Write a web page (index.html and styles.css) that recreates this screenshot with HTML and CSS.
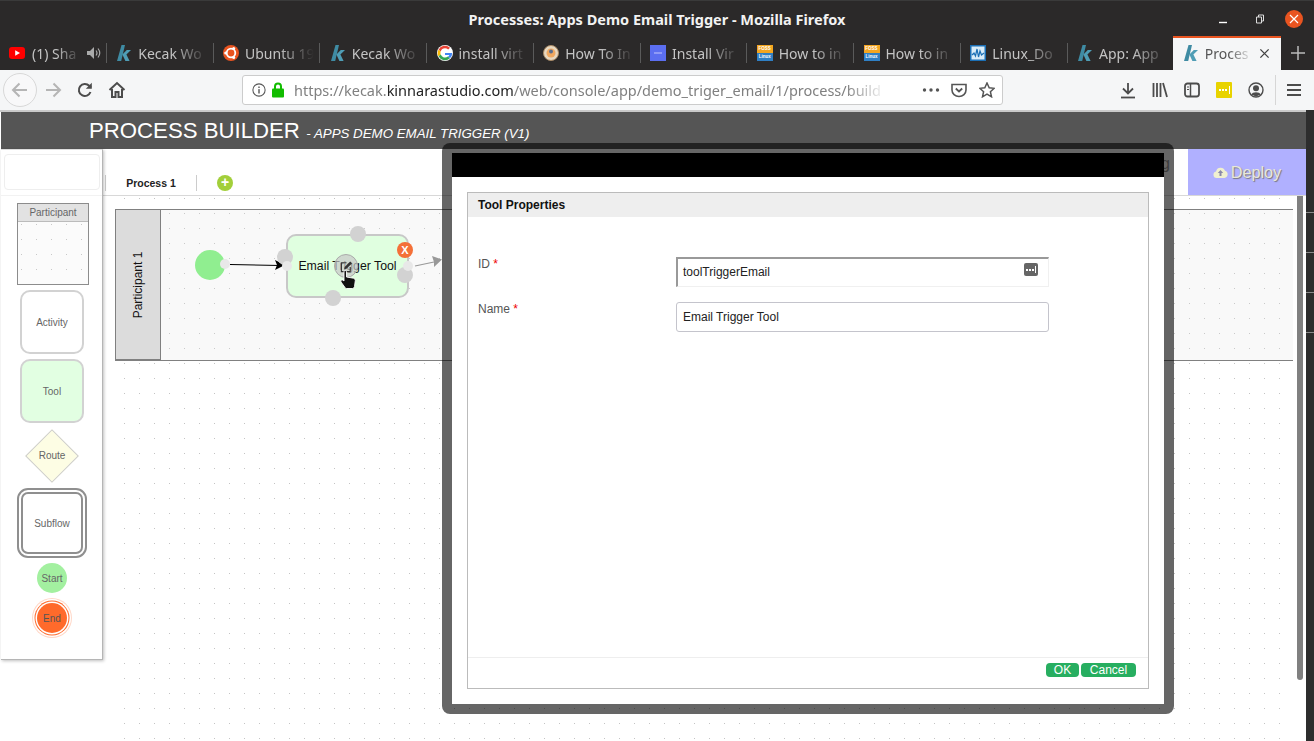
FILE: index.html
```html
<html>
    <head>
        <title>Processes: Apps Demo Email Trigger - Mozilla Firefox</title>
        <link rel="stylesheet" href="styles.css">
    </head>
    <body>
        <svg class="defs" width="0" height="0">
            <symbol id="klogo" viewBox="0 0 16 16">
                <path d="M5.5 0L9 0L5.2 16L1 16Z" fill="#3f8ba3"/>
                <path d="M15 5L10.8 5L6.4 9.6L9.4 16L13.6 16L10.4 9.6Z" fill="#4f9db5"/>
            </symbol>
        </svg>

        <!-- window title -->
        <div class="titlebar">
            <span class="window-title">Processes: Apps Demo Email Trigger - Mozilla Firefox</span>
            <div class="window-buttons">
                <svg class="win-min" width="10" height="10" viewBox="0 0 10 10"><path d="M1 8.5H9" stroke="#fff" stroke-width="1.4"/></svg>
                <svg class="win-max" width="10" height="10" viewBox="0 0 10 10"><path d="M1.5 3H6.5V9H1.5ZM3.5 3V1H8.5V7H6.5" fill="none" stroke="#ddd"/></svg>
                <div class="win-close">
                    <svg width="10" height="10" viewBox="0 0 10 10"><path d="M1 1L9 9M9 1L1 9" stroke="#fff" stroke-width="1.2"/></svg>
                </div>
            </div>
        </div>

        <!-- tabs -->
        <div class="tabstrip">
            <div class="tabs">
                <div class="tab tab-first">
                    <svg class="fav" viewBox="0 0 16 16"><rect y="2" width="16" height="12" rx="3" fill="#f00"/><path d="M6.2 5.2L11 8L6.2 10.8Z" fill="#fff"/></svg>
                    <span class="tab-text tab-text-short">(1) Sha</span>
                    <svg class="mute" viewBox="0 0 14 14"><path d="M0 5H3L7 1V13L3 9H0Z" fill="#aaa"/><path d="M9 4.5Q11 7 9 9.5M11 2.5Q14.500 7 11 11.500" fill="none" stroke="#aaa" stroke-width="1.2"/></svg>
                </div>
                <div class="tab">
                    <svg class="fav"><use href="#klogo"/></svg>
                    <span class="tab-text">Kecak Wo</span>
                </div>
                <div class="tab">
                    <svg class="fav" viewBox="0 0 16 16"><circle cx="8" cy="8" r="8" fill="#e95420"/><circle cx="8" cy="8" r="4.300" fill="none" stroke="#fff" stroke-width="1.800"/><circle cx="2.700" cy="8" r="1.500" fill="#fff"/><circle cx="10.700" cy="3.400" r="1.500" fill="#fff"/><circle cx="10.700" cy="12.600" r="1.500" fill="#fff"/></svg>
                    <span class="tab-text">Ubuntu 19</span>
                </div>
                <div class="tab">
                    <svg class="fav"><use href="#klogo"/></svg>
                    <span class="tab-text">Kecak Wo</span>
                </div>
                <div class="tab">
                    <svg class="fav" viewBox="0 0 16 16"><circle cx="8" cy="8" r="8" fill="#fff"/><path d="M8 3.300A4.700 4.700 0 0 1 11.200 4.600L13 2.700A7.300 7.300 0 0 0 1.500 4.700L3.700 6.400A4.700 4.700 0 0 1 8 3.300Z" fill="#ea4335"/><path d="M1.500 4.700A7.300 7.300 0 0 0 1.500 11.300L3.700 9.600A4.700 4.700 0 0 1 3.700 6.400Z" fill="#fbbc05"/><path d="M1.500 11.300A7.300 7.300 0 0 0 13 13.300L10.900 11.600A4.700 4.700 0 0 1 3.700 9.600Z" fill="#34a853"/><path d="M15.200 8H8V10H12.400A4 4 0 0 1 10.900 11.600L13 13.300A7.300 7.300 0 0 0 15.200 8Z" fill="#4285f4"/></svg>
                    <span class="tab-text">install virt</span>
                </div>
                <div class="tab">
                    <svg class="fav" viewBox="0 0 16 16"><circle cx="8" cy="8" r="7.500" fill="#e8d8c0" stroke="#a98a66"/><circle cx="8" cy="8" r="4.500" fill="#f0a860"/><circle cx="8" cy="6.500" r="2" fill="#5b6d8c"/></svg>
                    <span class="tab-text">How To In</span>
                </div>
                <div class="tab">
                    <svg class="fav" viewBox="0 0 16 16"><rect width="16" height="16" fill="#5b6ef0"/><rect x="4" y="7" width="8" height="2" fill="#8f9af6"/></svg>
                    <span class="tab-text">Install Vir</span>
                </div>
                <div class="tab">
                    <div class="foss"><span>FOSS</span><span>Linux</span></div>
                    <span class="tab-text">How to in</span>
                </div>
                <div class="tab">
                    <div class="foss"><span>FOSS</span><span>Linux</span></div>
                    <span class="tab-text">How to in</span>
                </div>
                <div class="tab">
                    <svg class="fav" viewBox="0 0 16 16"><rect width="16" height="16" fill="#1b6fb5"/><rect x="1.500" y="1.500" width="13" height="13" fill="#d9ecf8"/><path d="M2 10L4 8L5.500 11L7 4L8.500 12L10 6L11.500 10L14 8" fill="none" stroke="#1b6fb5" stroke-width="1.200"/></svg>
                    <span class="tab-text">Linux_Do</span>
                </div>
                <div class="tab">
                    <svg class="fav"><use href="#klogo"/></svg>
                    <span class="tab-text">App: App</span>
                </div>
                <div class="tab tab-active">
                    <svg class="fav"><use href="#klogo"/></svg>
                    <span class="tab-text">Proces</span>
                    <svg class="tab-close" viewBox="0 0 12 12"><path d="M1.500 1.500L10.500 10.500M10.500 1.500L1.500 10.500" stroke="#444" stroke-width="1.500"/></svg>
                </div>
            </div>
            <svg class="new-tab" viewBox="0 0 14 14"><path d="M7 0V14M0 7H14" stroke="#bbb" stroke-width="1.500"/></svg>
        </div>

        <!-- toolbar -->
        <div class="toolbar">
            <div class="nav-back">
                <svg width="18" height="18" viewBox="0 0 18 18"><path d="M16 9H2M8.500 2.500L2 9L8.500 15.500" fill="none" stroke="#b5b5b5" stroke-width="2"/></svg>
            </div>
            <div class="tool-btn">
                <svg width="18" height="18" viewBox="0 0 18 18"><path d="M2 9H16M9.500 2.500L16 9L9.500 15.500" fill="none" stroke="#b5b5b5" stroke-width="2"/></svg>
            </div>
            <div class="tool-btn">
                <svg width="18" height="18" viewBox="0 0 18 18"><path d="M14.500 11A6 6 0 1 1 13.200 4.800L15 6.500" fill="none" stroke="#4c4c4c" stroke-width="2"/><path d="M15.800 1.800V7.800H9.800Z" fill="#4c4c4c"/></svg>
            </div>
            <div class="tool-btn">
                <svg width="18" height="18" viewBox="0 0 18 18"><path d="M1.500 9L9 2L16.500 9" fill="none" stroke="#4c4c4c" stroke-width="2"/><path d="M4 8V16H7.500V11H10.500V16H14V8" fill="none" stroke="#4c4c4c" stroke-width="2"/></svg>
            </div>
            <div class="urlbar">
                <svg class="url-info" width="16" height="16" viewBox="0 0 16 16"><circle cx="8" cy="8" r="7" fill="none" stroke="#555" stroke-width="1.200"/><rect x="7.200" y="7" width="1.600" height="5" fill="#555"/><rect x="7.200" y="4" width="1.600" height="1.700" fill="#555"/></svg>
                <svg class="url-lock" width="12" height="16" viewBox="0 0 12 16"><rect y="6.500" width="12" height="9" rx="1" fill="#12bc00"/><path d="M3 7V4.500A3 3 0 0 1 9 4.500V7" fill="none" stroke="#12bc00" stroke-width="2"/></svg>
                <span class="url-text">https://kecak.<b>kinnarastudio.com</b>/web/console/app/demo_triger_email/1/process/build</span>
                <svg class="url-dots" width="18" height="4" viewBox="0 0 18 4"><circle cx="2.500" cy="2" r="1.700" fill="#555"/><circle cx="9" cy="2" r="1.700" fill="#555"/><circle cx="15.500" cy="2" r="1.700" fill="#555"/></svg>
                <svg class="url-pocket" width="16" height="16" viewBox="0 0 16 16"><path d="M1 2.500H15V8A7 6.500 0 0 1 1 8Z" fill="none" stroke="#555" stroke-width="1.600"/><path d="M4.800 6.500L8 9.500L11.200 6.500" fill="none" stroke="#555" stroke-width="1.800"/></svg>
                <svg class="url-star" width="16" height="16" viewBox="0 0 16 16"><path d="M8 1L10.200 5.800L15.200 6.300L11.400 9.700L12.500 14.800L8 12.200L3.500 14.800L4.600 9.700L0.800 6.300L5.800 5.800Z" fill="none" stroke="#555" stroke-width="1.500"/></svg>
            </div>
            <div class="tool-btn tool-first-right">
                <svg width="16" height="17" viewBox="0 0 16 17"><path d="M8 1V11M3 6.500L8 11.500L13 6.500" fill="none" stroke="#4c4c4c" stroke-width="1.800"/><path d="M1 15.500H15" stroke="#4c4c4c" stroke-width="1.800"/></svg>
            </div>
            <div class="tool-btn">
                <svg width="16" height="16" viewBox="0 0 16 16"><path d="M1.500 1V15M5 1V15M8.500 1V15" stroke="#4c4c4c" stroke-width="1.800"/><path d="M11 1L15 15" stroke="#4c4c4c" stroke-width="1.800"/></svg>
            </div>
            <div class="tool-btn">
                <svg width="16" height="16" viewBox="0 0 16 16"><rect x="1" y="1.500" width="14" height="13" rx="2.500" fill="none" stroke="#4c4c4c" stroke-width="1.800"/><path d="M6.500 2V14" stroke="#4c4c4c" stroke-width="1.500"/><path d="M3 5H5M3 7.500H5" stroke="#4c4c4c"/></svg>
            </div>
            <div class="tool-btn">
                <div class="lastpass"><i></i><i></i><i></i><b></b></div>
            </div>
            <div class="tool-btn">
                <svg width="16" height="16" viewBox="0 0 16 16"><circle cx="8" cy="8" r="7" fill="none" stroke="#4c4c4c" stroke-width="1.400"/><circle cx="8" cy="6.200" r="3" fill="#4c4c4c"/><path d="M3 12.500A5.500 4 0 0 1 13 12.500L8 14.500Z" fill="#4c4c4c"/></svg>
            </div>
            <div class="toolbar-sep"></div>
            <div class="tool-btn tool-menu">
                <svg width="14" height="12" viewBox="0 0 14 12"><path d="M0 1H14M0 6H14M0 11H14" stroke="#4c4c4c" stroke-width="1.800"/></svg>
            </div>
        </div>

        <!-- page -->
        <div class="page">
            <div class="app">
                <div class="app-header">
                    <span class="app-title">PROCESS BUILDER</span>
                    <span class="app-sub">- APPS DEMO EMAIL TRIGGER (V1)</span>
                </div>
                <div class="workspace">
                    <div class="palette">
                        <div class="palette-search"></div>
                        <div class="palette-line"></div>
                        <div class="pal-participant">
                            <div class="pal-participant-head">Participant</div>
                        </div>
                        <div class="pal-node pal-activity">Activity</div>
                        <div class="pal-node pal-tool">Tool</div>
                        <div class="pal-route"><div class="pal-route-shape"></div><span>Route</span></div>
                        <div class="pal-node pal-subflow">Subflow</div>
                        <div class="pal-start">Start</div>
                        <div class="pal-end">End</div>
                    </div>
                    <div class="main">
                        <div class="proc-bar">
                            <div class="proc-tab">Process 1</div>
                            <div class="proc-add">+</div>
                            <span class="proc-hidden">g</span>
                            <div class="deploy">
                                <svg width="15" height="11" viewBox="0 0 15 11"><path d="M3.500 11A3.300 3.300 0 0 1 3 4.500A4.700 4.700 0 0 1 12 3.800A3.700 3.700 0 0 1 11.500 11Z" fill="#f0f0d0"/><path d="M7.500 3L4.800 6H6.500V9H8.500V6H10.200Z" fill="#8a8aa8"/></svg>
                                Deploy
                            </div>
                        </div>
                        <div class="canvas-wrap">
                            <div class="canvas">
                                <div class="lane">
                                    <div class="lane-head"><span>Participant 1</span></div>
                                </div>
                                <svg class="links" width="260" height="60" viewBox="0 0 260 60">
                                    <path d="M12 34.500L62 35.500" stroke="#000" stroke-width="1.200"/>
                                    <path d="M57 30L67 35L57 40L59 35Z" fill="#000"/>
                                    <path d="M197 36L216 32" stroke="#999" stroke-width="1.200"/>
                                    <path d="M214 26L224 29.500L216 37L216 32Z" fill="#999"/>
                                </svg>
                                <div class="flow-start"></div>
                                <div class="handle handle-start"></div>
                                <div class="flow-tool">
                                    <span>Email Trigger Tool</span>
                                    <div class="port port-top"></div>
                                    <div class="port port-left"></div>
                                    <div class="port port-bottom"></div>
                                    <div class="port port-right"></div>
                                    <div class="handle handle-left"></div>
                                    <div class="handle handle-right"></div>
                                    <div class="tool-delete">X</div>
                                    <div class="tool-edit">
                                        <svg width="13" height="13" viewBox="0 0 14 14"><path d="M11 7.500V12.500H1.500V3H7" fill="none" stroke="#333" stroke-width="1.200"/><path d="M4.500 10L5 7.500L11 1.500L13 3.500L7 9.500Z" fill="#333"/></svg>
                                    </div>
                                    <svg class="cursor" width="16" height="19" viewBox="0 0 16 19"><path d="M4 1.500Q4 0.500 5.200 0.500Q6.500 0.500 6.500 1.500V7L13.500 8.200Q15.500 8.800 15.300 10.500L14.500 16.500Q14.200 18.500 12.500 18.500H6.500Q5.500 18.500 5 17.500L1 12Q0.300 10.800 1.500 10Q2.800 9.500 4 11Z" fill="#111" stroke="#fff" stroke-width="0.900"/></svg>
                                </div>
                            </div>
                            <div class="scroll-col"><div class="scroll-thumb"></div></div>
                        </div>
                    </div>
                </div>
            </div>
            <div class="side-strip">
                <i></i><i></i><i></i><i></i>
            </div>

            <!-- properties dialog -->
            <div class="modal">
                <div class="modal-title"></div>
                <div class="modal-body">
                    <div class="props">
                        <div class="props-head">Tool Properties</div>
                        <div class="props-form">
                            <label class="props-label">ID <em>*</em></label>
                            <div class="field field-id">toolTriggerEmail
                                <div class="field-btn"><i></i><i></i><i></i><b></b></div>
                            </div>
                            <label class="props-label">Name <em>*</em></label>
                            <div class="field">Email Trigger Tool</div>
                        </div>
                        <div class="props-foot">
                            <button class="btn btn-ok">OK</button>
                            <button class="btn btn-cancel">Cancel</button>
                        </div>
                    </div>
                </div>
            </div>
        </div>
    </body>
</html>
```
FILE: styles.css
```css
html, body {
    margin: 0;
    padding: 0;
}

body {
    width: 1314px;
    height: 741px;
    overflow: hidden;
    background: #2b2929;
    font-family: "Liberation Sans", sans-serif;
}

.defs {
    position: absolute;
}

/* window title */
.titlebar {
    height: 36px;
    box-sizing: border-box;
    border-top: 1px solid #3a3a3a;
    background: #2b2929;
    display: flex;
    align-items: center;
    justify-content: center;
    position: relative;
}

.window-title {
    color: #f2f2f2;
    font: bold 14.500px "Noto Sans", sans-serif;
    margin-top: 1px;
}

.window-buttons {
    position: absolute;
    right: 0;
    top: 0;
    height: 36px;
    display: flex;
    align-items: center;
}

.win-min {
    margin-right: 27px;
}

.win-max {
    margin-right: 20px;
}

.win-close {
    width: 18px;
    height: 18px;
    margin-right: 11px;
    border-radius: 50%;
    background: #e95420;
    display: flex;
    align-items: center;
    justify-content: center;
}

/* tabs */
.tabstrip {
    height: 34px;
    background: #2b2929;
    display: flex;
    border-bottom: 0;
}

.tabs {
    width: 1281px;
    display: grid;
    grid-template-columns: repeat(12, 1fr);
}

.tab {
    position: relative;
    display: flex;
    align-items: center;
    gap: 6px;
    padding: 0 6px 0 9.500px;
    min-width: 0;
    overflow: hidden;
    font: 14px "Noto Sans", sans-serif;
    color: #c4c4c4;
}

.tab::after {
    content: "";
    position: absolute;
    right: 0;
    top: 7px;
    height: 20px;
    width: 1px;
    background: #5a5a5a;
}

.tab-first {
    padding-left: 9px;
}

.fav {
    width: 16px;
    height: 16px;
    flex: none;
}

.foss {
    width: 16px;
    height: 16px;
    flex: none;
    display: flex;
    flex-direction: column;
    font: bold 4.500px/8px "Liberation Sans", sans-serif;
    color: #fff;
    text-align: center;
}

.foss span {
    height: 8px;
    background: #2f7fc4;
}

.foss span:first-child {
    background: #f4a51f;
}

.tab-text {
    flex: 1;
    min-width: 0;
    white-space: nowrap;
    -webkit-mask-image: linear-gradient(to right, #000 50%, transparent 100%);
    mask-image: linear-gradient(to right, #000 50%, transparent 100%);
}

.tab-text-short {
    margin-left: 1px;
}

.mute {
    width: 14px;
    height: 14px;
    flex: none;
}

.tab-active {
    background: #f5f6f7;
    color: #555;
    border-top: 2px solid #e95420;
    padding-bottom: 2px;
    margin-left: -1px;
}

.tab-active::after {
    display: none;
}

.tab-close {
    width: 11px;
    height: 11px;
    flex: none;
    margin-right: 5px;
}

.new-tab {
    width: 14px;
    height: 14px;
    margin: 10px 0 0 10px;
}

/* toolbar */
.toolbar {
    height: 40px;
    box-sizing: border-box;
    padding-left: 3px;
    background: #f5f6f7;
    display: flex;
    align-items: center;
}

.tool-btn {
    width: 32px;
    height: 32px;
    flex: none;
    display: flex;
    align-items: center;
    justify-content: center;
}

.nav-back {
    width: 34px;
    height: 34px;
    box-sizing: border-box;
    flex: none;
    border: 1px solid #d8d8d8;
    border-radius: 50%;
    background: #f8f8f9;
    display: flex;
    align-items: center;
    justify-content: center;
}

.urlbar {
    width: 761px;
    height: 30px;
    box-sizing: border-box;
    margin-left: 109px;
    padding: 0 7px 0 9px;
    flex: none;
    background: #fff;
    border: 1px solid #ccc;
    border-radius: 3px;
    display: flex;
    align-items: center;
}

.url-lock {
    margin-left: 6px;
    flex: none;
}

.url-text {
    margin-left: 10px;
    width: 593px;
    flex: none;
    white-space: nowrap;
    overflow: hidden;
    font: 14.500px "Noto Sans", sans-serif;
    color: #808080;
    -webkit-mask-image: linear-gradient(to right, #000 93%, transparent 100%);
    mask-image: linear-gradient(to right, #000 93%, transparent 100%);
}

.url-text b {
    font-weight: normal;
    color: #222;
}

.url-dots {
    margin-left: 35px;
    flex: none;
}

.url-pocket {
    margin-left: 11px;
    flex: none;
}

.url-star {
    margin-left: 12px;
    flex: none;
}

.tool-first-right {
    margin-left: 109px;
}

.lastpass {
    width: 16px;
    height: 16px;
    border-radius: 1px;
    background: #e8d300;
    display: flex;
    align-items: center;
    justify-content: center;
    gap: 1px;
}

.lastpass i {
    width: 2px;
    height: 2px;
    background: #fff;
}

.lastpass b {
    width: 1px;
    height: 8px;
    margin-left: 1px;
    background: #fff;
}

.toolbar-sep {
    width: 1px;
    height: 30px;
    margin-left: 3px;
    background: #d6d6d6;
}

.tool-menu {
    margin-left: 2px;
}

/* page */
.page {
    position: relative;
    height: 631px;
    display: flex;
    background: #c9c9c9;
    padding-top: 2px;
    box-sizing: border-box;
}

.app {
    width: 1306px;
    padding-left: 1px;
    box-sizing: border-box;
    background: #fff;
    display: flex;
    flex-direction: column;
}

.side-strip {
    width: 8px;
    margin-top: -2px;
    background: #2d2d2d;
    padding-top: 102px;
    box-sizing: border-box;
    display: flex;
    flex-direction: column;
    gap: 39px;
}

.side-strip i {
    height: 1px;
    background: #8a8a8a;
}

.app-header {
    height: 37px;
    flex: none;
    box-sizing: border-box;
    padding: 6px 0 0 88px;
    background: #555;
    color: #fff;
    white-space: nowrap;
}

.app-title {
    font-size: 22.200px;
}

.app-sub {
    font-size: 13.300px;
    font-style: italic;
    margin-left: 2px;
}

.workspace {
    flex: 1;
    display: flex;
    min-height: 0;
    background: #fff;
}

/* palette */
.palette {
    width: 102px;
    height: 511px;
    box-sizing: border-box;
    flex: none;
    border-right: 1px solid #b5b5b5;
    border-bottom: 1px solid #b5b5b5;
    border-top: 1px solid #ddd;
    box-shadow: 1px 1px 3px rgba(0, 0, 0, 0.25);
    background: #fff;
    padding-top: 4px;
    display: flex;
    flex-direction: column;
    align-items: center;
    font-size: 10px;
    color: #666;
    position: relative;
    z-index: 1;
}

.palette-search {
    width: 96px;
    height: 36px;
    box-sizing: border-box;
    margin-left: 1px;
    flex: none;
    border: 1px solid #eee;
    border-radius: 4px;
}

.palette-line {
    align-self: stretch;
    height: 1px;
    margin-top: 5px;
    background: #f2f2f2;
    flex: none;
}

.pal-participant {
    width: 72px;
    height: 82px;
    box-sizing: border-box;
    margin: 7px 0 0 3px;
    flex: none;
    border: 1px solid #8c8c8c;
    background-color: #fbfbfb;
    background-image: radial-gradient(circle at 0.5px 0.5px, #c8c8c8 0.5px, transparent 0.5px);
    background-size: 15px 15px;
    background-position: 3px 5px;
}

.pal-participant-head {
    height: 18px;
    box-sizing: border-box;
    border-bottom: 1px solid #bbb;
    background: #e2e2e2;
    text-align: center;
    line-height: 17px;
}

.pal-node {
    width: 64px;
    height: 64px;
    box-sizing: border-box;
    margin-left: 1px;
    flex: none;
    border: 2px solid #d2d2d2;
    border-radius: 10px;
    display: flex;
    align-items: center;
    justify-content: center;
}

.pal-activity {
    margin-top: 5px;
    background: #fff;
}

.pal-tool {
    margin-top: 5px;
    background: #e2ffe2;
}

.pal-route {
    width: 54px;
    height: 55px;
    margin: 5px 0 0 1px;
    flex: none;
    position: relative;
    display: flex;
    align-items: center;
    justify-content: center;
}

.pal-route-shape {
    position: absolute;
    left: 8px;
    top: 8.500px;
    width: 38px;
    height: 38px;
    box-sizing: border-box;
    border: 1px solid #ccc;
    background: #fdfde4;
    transform: rotate(45deg);
}

.pal-route span {
    position: relative;
}

.pal-subflow {
    width: 70px;
    height: 70px;
    margin-top: 5px;
    border: 6px double #8f8f8f;
    border-radius: 11px;
}

.pal-start,
.pal-end {
    width: 30px;
    height: 30px;
    margin-left: 1px;
    flex: none;
    border-radius: 50%;
    display: flex;
    align-items: center;
    justify-content: center;
}

.pal-start {
    margin-top: 5px;
    background: #a3f0a0;
}

.pal-end {
    margin-top: 10px;
    background: #ff6a2b;
    color: #555;
    box-shadow: 0 0 0 1.500px #fff, 0 0 0 2.500px #ff6a2b, 0 0 0 4px #fff, 0 0 0 5px #ffd8c8;
}

/* main */
.main {
    flex: 1;
    min-width: 0;
    display: flex;
    flex-direction: column;
}

.proc-bar {
    height: 47px;
    box-sizing: border-box;
    flex: none;
    border-bottom: 1px solid #d8d8d8;
    display: flex;
    align-items: flex-end;
    padding-left: 2px;
    position: relative;
}

.proc-tab {
    width: 92px;
    height: 16px;
    margin-bottom: 4px;
    box-sizing: border-box;
    border-left: 1px solid #ccc;
    border-right: 1px solid #ccc;
    text-align: center;
    font-size: 10.500px;
    font-weight: bold;
    line-height: 16px;
    color: #222;
}

.proc-add {
    width: 16px;
    height: 16px;
    margin: 0 0 4px 20px;
    border-radius: 50%;
    background: #a2cf3a;
    color: #fff;
    font-size: 14px;
    font-weight: bold;
    line-height: 15px;
    text-align: center;
}

.proc-hidden {
    margin: 0 18px 0 auto;
    align-self: flex-start;
    padding-top: 6px;
    font-size: 16px;
    color: #999;
}

.deploy {
    width: 118px;
    height: 46px;
    box-sizing: border-box;
    padding-top: 1px;
    background: #b0b0ff;
    color: #e8e8d8;
    font-size: 16.200px;
    text-shadow: 1px 1px 1px #777;
    display: flex;
    align-items: center;
    justify-content: center;
    gap: 3px;
}

.canvas-wrap {
    flex: 1;
    min-height: 0;
    display: flex;
    background: #fff;
}

.canvas {
    position: relative;
    flex: 1;
    min-width: 0;
    padding: 0 7px 0 11px;
    background-image: radial-gradient(circle at 0.5px 0.5px, #c4c4c4 0.5px, transparent 0.5px);
    background-size: 15px 15px;
    background-position: 6px 2px;
    background-clip: content-box;
}

.scroll-col {
    width: 9px;
    flex: none;
}

.scroll-thumb {
    width: 6px;
    height: 484px;
    background: #808080;
    border-radius: 0 0 3px 3px;
}

/* process diagram */
.lane {
    position: absolute;
    left: 12px;
    top: 13px;
    width: 1178px;
    height: 152px;
    box-sizing: border-box;
    border-top: 1px solid #808080;
    border-bottom: 1px solid #808080;
    background-color: #f9f9f9;
    background-image: radial-gradient(circle at 0.5px 0.5px, #cacaca 0.5px, transparent 0.5px);
    background-size: 15px 15px;
    background-position: 9px 3px;
}

.lane-head {
    width: 46px;
    height: 152px;
    margin-top: -1px;
    box-sizing: border-box;
    border: 1px solid #808080;
    border-bottom-width: 2px;
    background: #dcdcdc;
    display: flex;
    align-items: center;
    justify-content: center;
    font-size: 12px;
    color: #111;
}

.lane-head span {
    transform: rotate(-90deg);
    white-space: nowrap;
}

.links {
    position: absolute;
    left: 115px;
    top: 34px;
}

.flow-start {
    position: absolute;
    left: 92px;
    top: 54px;
    width: 30px;
    height: 30px;
    border-radius: 50%;
    background: #90ee90;
}

.handle {
    position: absolute;
    width: 10px;
    height: 10px;
    border-radius: 50%;
    background: #e8e8e8;
}

.handle-start {
    left: 117px;
    top: 63px;
}

.flow-tool {
    position: absolute;
    left: 183px;
    top: 38px;
    width: 123px;
    height: 64px;
    box-sizing: border-box;
    border: 2px solid #c8c8c8;
    border-radius: 10px;
    background: #e0ffe0;
    display: flex;
    align-items: center;
    justify-content: center;
    font-size: 12.300px;
    color: #111;
}

.port {
    position: absolute;
    width: 16px;
    height: 16px;
    border-radius: 50%;
    background: #d2d2d2;
}

.port-top {
    left: 62px;
    top: -10px;
}

.port-left {
    left: -11px;
    top: 13px;
}

.port-bottom {
    left: 37px;
    top: 54px;
}

.port-right {
    left: 109px;
    top: 31px;
}

.handle-left {
    left: -6px;
    top: 25px;
}

.handle-right {
    left: 115px;
    top: 25px;
}

.tool-delete {
    position: absolute;
    left: 109px;
    top: 6px;
    width: 16px;
    height: 16px;
    border-radius: 50%;
    background: #f47038;
    color: #fff;
    font-size: 11px;
    font-weight: bold;
    line-height: 16px;
    text-align: center;
}

.tool-edit {
    position: absolute;
    left: 46px;
    top: 18px;
    width: 24px;
    height: 24px;
    box-sizing: border-box;
    border: 1px solid #aaa;
    border-radius: 50%;
    background: rgba(200, 200, 200, 0.7);
    display: flex;
    align-items: center;
    justify-content: center;
}

.cursor {
    position: absolute;
    left: 52px;
    top: 34px;
}

/* dialog */
.modal {
    position: absolute;
    left: 442px;
    top: 33px;
    width: 732px;
    height: 571px;
    box-sizing: border-box;
    padding: 10px;
    border-radius: 8px;
    background: rgba(0, 0, 0, 0.6);
    display: flex;
    flex-direction: column;
    z-index: 2;
}

.modal-title {
    height: 24px;
    flex: none;
    background: #000;
}

.modal-body {
    flex: 1;
    min-height: 0;
    padding: 15px;
    background: #fff;
    display: flex;
}

.props {
    flex: 1;
    border: 1px solid #bbb;
    display: flex;
    flex-direction: column;
}

.props-head {
    height: 24px;
    flex: none;
    box-sizing: border-box;
    padding-left: 10px;
    background: #eee;
    font-size: 12px;
    font-weight: bold;
    line-height: 24px;
    color: #111;
}

.props-form {
    flex: 1;
    padding: 40px 99px 0 10px;
    display: grid;
    grid-template-columns: 198px 373px;
    grid-auto-rows: 30px;
    row-gap: 15px;
    align-content: start;
}

.props-label {
    font-size: 12px;
    color: #555;
}

.props-label em {
    font-style: normal;
    color: #e00;
}

.field {
    box-sizing: border-box;
    padding-left: 6px;
    border: 1px solid #c4c4cc;
    border-radius: 3px;
    font-size: 12px;
    line-height: 28px;
    color: #222;
    position: relative;
}

.field-id {
    border-style: solid;
    border-width: 2px 1px 1px 2px;
    border-color: #999 #f0f0f0 #f0f0f0 #999;
    border-radius: 0;
    padding-left: 5px;
    line-height: 26px;
}

.field-btn {
    position: absolute;
    right: 10px;
    top: 4px;
    width: 14px;
    height: 13px;
    border-radius: 2px;
    background: #666;
    display: flex;
    align-items: center;
    justify-content: center;
    gap: 1px;
}

.field-btn i {
    width: 2px;
    height: 2px;
    background: #fff;
}

.field-btn b {
    width: 1px;
    height: 7px;
    background: #fff;
}

.props-foot {
    height: 31px;
    flex: none;
    box-sizing: border-box;
    border-top: 1px solid #eee;
    padding: 5px 12px 0 0;
    display: flex;
    justify-content: flex-end;
    align-items: flex-start;
    gap: 2px;
}

.btn {
    height: 14px;
    padding: 0;
    border: 0;
    border-radius: 4px;
    background: #27ae60;
    color: #fff;
    font: 12px "Liberation Sans", sans-serif;
    line-height: 14px;
}

.btn-ok {
    width: 33px;
}

.btn-cancel {
    width: 55px;
}
```
